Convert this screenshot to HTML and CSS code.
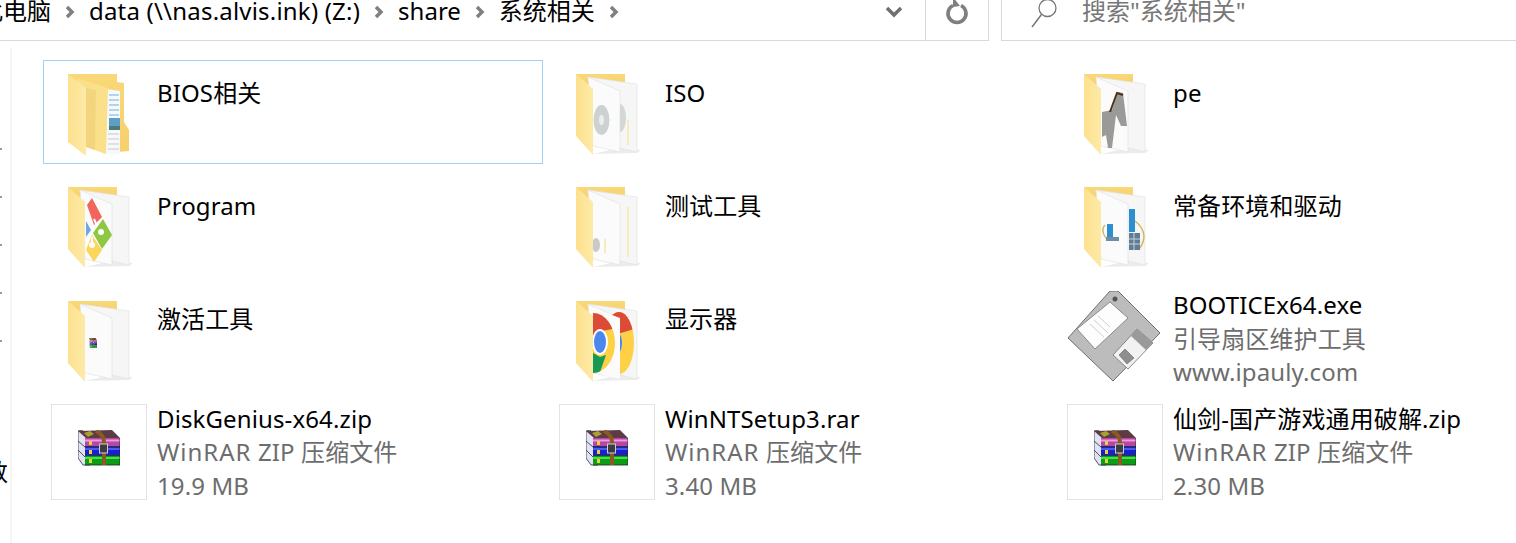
FILE: index.html
```html
<!DOCTYPE html>
<html lang="zh-CN">
<head>
    <meta charset="UTF-8">
    <title>系统相关</title>
    <link rel="stylesheet" href="styles.css">
</head>
<body>
    <svg class="defs" width="0" height="0">
        <defs>
            <linearGradient id="flapFill" x1="0" y1="0" x2="1" y2="0">
                <stop offset="0" stop-color="#fde08d"/>
                <stop offset="1" stop-color="#fdeaa8"/>
            </linearGradient>
            <linearGradient id="backFill" x1="0" y1="0" x2="0" y2="1">
                <stop offset="0" stop-color="#f9d878"/>
                <stop offset="1" stop-color="#f6d06c"/>
            </linearGradient>
            <clipPath id="backPaper"><polygon points="61,22 78,20 78,88 61,83"/></clipPath>
            <clipPath id="chromeFront"><ellipse cx="34" cy="52" rx="22" ry="30"/></clipPath>
            <clipPath id="chromeBack"><ellipse cx="60" cy="52" rx="15" ry="31"/></clipPath>
            <g id="folderBack">
                <polygon points="34,90 78,89 82,86 60,84" fill="#ececec"/>
                <polygon points="17,10 66,10 66,24 17,24" fill="url(#backFill)"/>
            </g>
            <g id="folderPapers">
                <polygon points="29,13 78,20 78,88 61,84" fill="#f6f6f6" stroke="#e2e2e2" stroke-width=".7"/>
                <polygon points="29,13 61,27 61,88 34,82" fill="#fbfbfb" stroke="#e2e2e2" stroke-width=".7"/>
            </g>
            <polygon id="folderFlap" points="17,10 34,25 34,91 17,72" fill="url(#flapFill)"/>
            <g id="rarBooks">
                <polygon points="0,1 4,0 12,11 12,35 5,35 0,28" fill="#dfe3f2" stroke="#2c2c3a" stroke-width=".8"/>
                <path d="M0 11l7 6M0 20l7 7" stroke="#2c2c3a" stroke-width=".8"/>
                <polygon points="0,1 34,0 42,8 8,8" fill="#5c3b45"/>
                <polygon points="6,3 12,1 16,4 10,7" fill="#a8a030"/>
                <rect x="7" y="8" width="35" height="8.500" fill="#b7479f"/>
                <rect x="7" y="16.500" width="35" height="9" fill="#1a1fd0"/>
                <rect x="7" y="25.500" width="35" height="9.500" fill="#0c9c16"/>
                <rect x="7" y="9.500" width="35" height="2" fill="#ee9ce0"/>
                <rect x="7" y="18" width="35" height="2" fill="#4a5cf2"/>
                <rect x="7" y="27" width="35" height="2" fill="#46df4e"/>
                <path d="M7 16.500h35M7 25.500h35M7 35h35M42 8v27" stroke="#1d2a1d" stroke-width=".8"/>
                <rect x="11" y="11" width="3" height="4" fill="#e6d23a"/>
                <rect x="11" y="20" width="3" height="4" fill="#e6d23a"/>
                <rect x="11" y="29" width="3" height="4" fill="#e6d23a"/>
                <path d="M18 1 C24 4 26 7 26 12 V35" fill="none" stroke="#8a5a22" stroke-width="4"/>
                <rect x="21.500" y="14" width="8" height="9" fill="#3c3c3c" stroke="#cfcfcf" stroke-width="1"/>
            </g>
        </defs>
    </svg>

    <header class="topbar">
        <div class="address">
            <div class="crumbs">
                <span class="crumb first">此电脑</span>
                <svg class="chevron" viewBox="0 0 10 14"><path d="M2 2l5 5-5 5"/></svg>
                <span class="crumb wide">data (\\nas.alvis.ink) (Z:)</span>
                <svg class="chevron" viewBox="0 0 10 14"><path d="M2 2l5 5-5 5"/></svg>
                <span class="crumb">share</span>
                <svg class="chevron" viewBox="0 0 10 14"><path d="M2 2l5 5-5 5"/></svg>
                <span class="crumb">系统相关</span>
                <svg class="chevron" viewBox="0 0 10 14"><path d="M2 2l5 5-5 5"/></svg>
            </div>
            <button class="drop">
                <svg viewBox="0 0 18 12" width="18" height="12"><path d="M2 2l7 7 7-7" fill="none" stroke="#6f6f6f" stroke-width="3.500"/></svg>
            </button>
            <button class="refresh">
                <svg viewBox="0 0 24 28" width="24" height="28"><path d="M8 5.500a9 9 0 1 0 8 0" fill="none" stroke="#7f7f7f" stroke-width="3.600"/><path d="M8 -3v10l7 -1z" fill="#7f7f7f"/></svg>
            </button>
        </div>
        <div class="search">
            <svg class="lens" viewBox="0 0 28 28" width="28" height="28"><circle cx="17.500" cy="8" r="8.500" fill="none" stroke="#777" stroke-width="1.300"/><path d="M11.500 14.500L2 27" stroke="#777" stroke-width="1.500"/></svg>
            <span>搜索"系统相关"</span>
        </div>
    </header>

    <main class="body">
        <aside class="nav">
            <i class="dot"></i><i class="dot"></i><i class="dot"></i><i class="dot"></i><i class="dot"></i>
            <span class="nav-label">数</span>
        </aside>

        <section class="grid">
            <div class="tile selected">
                <svg class="icon" viewBox="0 0 96 96">
                    <polygon points="17,10 66,10 66,18 73,19 73,58 78,66 78,87 55,89 17,70" fill="url(#backFill)"/>
                    <polygon points="55,25 69,27 69,90 52,90" fill="#f7f8f9"/>
                    <path d="M58 31h10M58 36h10M58 41h10M58 46h10M58 51h10" stroke="#6cb3de" stroke-width="1"/>
                    <rect x="58" y="54" width="11" height="12" fill="#5c9fc9"/>
                    <rect x="58" y="62" width="11" height="4" fill="#4d7c74"/>
                    <path d="M57 70h11M57 75h11M57 80h11M57 85h11" stroke="#c9c9c9" stroke-width="1"/>
                    <polygon points="26,14 57,24 55,90 35,83" fill="#fbe08c"/>
                    <polygon points="35,24 45,26 44,86 35,83" fill="#f3d57e"/>
                    <polygon points="17,10 35,24 35,92 17,78" fill="url(#flapFill)"/>
                </svg>
                <div class="info folder"><div class="name">BIOS相关</div></div>
            </div>

            <div class="tile">
                <svg class="icon" viewBox="0 0 96 96">
                    <use href="#folderBack"/><use href="#folderPapers"/>
                    <ellipse cx="61" cy="54" rx="6" ry="14" fill="#d3d8d6" clip-path="url(#backPaper)"/>
                    <ellipse cx="42.500" cy="56" rx="8" ry="15" fill="#cdd2d0"/>
                    <ellipse cx="42.500" cy="56" rx="2.500" ry="5" fill="#eceeed"/>
                    <path d="M69 56v25" stroke="#f8e6a8" stroke-width="1.500"/>
                    <use href="#folderFlap"/>
                </svg>
                <div class="info folder"><div class="name">ISO</div></div>
            </div>

            <div class="tile">
                <svg class="icon" viewBox="0 0 96 96">
                    <use href="#folderBack"/><use href="#folderPapers"/>
                    <polygon points="35,48 45,46 51,28 56,29 60,62 54,62 49,51 45,84 41,84 39,71 35,73" fill="#9a9a98"/>
                    <path d="M43 48L50 29l6 2" fill="none" stroke="#4a3418" stroke-width="2"/>
                    <use href="#folderFlap"/>
                </svg>
                <div class="info folder"><div class="name">pe</div></div>
            </div>

            <div class="tile">
                <svg class="icon" viewBox="0 0 96 96">
                    <use href="#folderBack"/><use href="#folderPapers"/>
                    <polygon points="36,28 41,21 51,40 43,48" fill="#f2655c"/>
                    <polygon points="52,42 61,58 51,72 42,56" fill="#8fc742"/>
                    <polygon points="41,58 51,73 43,85 35,73" fill="#fbd65a"/>
                    <polygon points="35,44 40,53 35,60" fill="#6fa6ea"/>
                    <circle cx="50" cy="55" r="3" fill="#fff"/>
                    <circle cx="41" cy="68" r="3" fill="#fff"/>
                    <path d="M43 42l3 7M41 60v8" stroke="#fff" stroke-width="2"/>
                    <use href="#folderFlap"/>
                </svg>
                <div class="info folder"><div class="name">Program</div></div>
            </div>

            <div class="tile">
                <svg class="icon" viewBox="0 0 96 96">
                    <use href="#folderBack"/><use href="#folderPapers"/>
                    <path d="M69 30v50M46 62v14" stroke="#f8e6a8" stroke-width="1.500"/>
                    <ellipse cx="37" cy="68" rx="4" ry="7" fill="#c9c9c9"/>
                    <use href="#folderFlap"/>
                </svg>
                <div class="info folder"><div class="name">测试工具</div></div>
            </div>

            <div class="tile">
                <svg class="icon" viewBox="0 0 96 96">
                    <use href="#folderBack"/><use href="#folderPapers"/>
                    <path d="M68 44C78 52 80 62 72 72" fill="none" stroke="#d3b95f" stroke-width="1.500"/>
                    <rect x="62" y="32" width="6" height="23" fill="#2e8fd0"/>
                    <rect x="62" y="56" width="11" height="17" fill="#5f7d93"/>
                    <path d="M62 62h11M62 67h11M67 56v17" stroke="#c8d4dc" stroke-width="1"/>
                    <path d="M38 48C34 52 36 62 44 63" fill="none" stroke="#d3b95f" stroke-width="1.500"/>
                    <rect x="40" y="47" width="6" height="13" fill="#2e8fd0"/>
                    <rect x="39" y="60" width="13" height="4" fill="#6b8fa8"/>
                    <use href="#folderFlap"/>
                </svg>
                <div class="info folder"><div class="name">常备环境和驱动</div></div>
            </div>

            <div class="tile">
                <svg class="icon" viewBox="0 0 96 96">
                    <use href="#folderBack"/><use href="#folderPapers"/>
                    <svg x="38" y="47" width="8" height="10" viewBox="0 0 42 36" preserveAspectRatio="none"><use href="#rarBooks"/></svg>
                    <use href="#folderFlap"/>
                </svg>
                <div class="info folder"><div class="name">激活工具</div></div>
            </div>

            <div class="tile">
                <svg class="icon" viewBox="0 0 96 96">
                    <use href="#folderBack"/><use href="#folderPapers"/>
                    <g clip-path="url(#chromeBack)">
                        <rect x="45" y="20" width="30" height="64" fill="#fdd045"/>
                        <path d="M45 20H75V38L62 42H45z" fill="#dc4a38"/>
                        <ellipse cx="60" cy="52" rx="3" ry="9" fill="#4a88ee"/>
                    </g>
                    <polygon points="45,21 61,27 61,88 45,85" fill="#fbfbfb"/>
                    <g clip-path="url(#chromeFront)">
                        <rect x="34" y="20" width="24" height="64" fill="#fdd045"/>
                        <path d="M34 20H58V37L43 40L34 46z" fill="#dc4a38"/>
                        <path d="M34 62L41 66L47 64L40 84H34z" fill="#159a52"/>
                    </g>
                    <ellipse cx="41" cy="51" rx="8" ry="13" fill="#fff"/>
                    <ellipse cx="41" cy="51" rx="6" ry="11" fill="#4a88ee"/>
                    <use href="#folderFlap"/>
                </svg>
                <div class="info folder"><div class="name">显示器</div></div>
            </div>

            <div class="tile">
                <svg class="icon" viewBox="7 5 96 96">
                    <polygon points="50,5 58,5 100,47 53,95 8,52" fill="#bcbcbc" stroke="#6f6f6f" stroke-width="1"/>
                    <polygon points="50,16 68,32 35,63 17,43" fill="#fdfdfd" stroke="#777" stroke-width=".8"/>
                    <path d="M30 38l14 13M34 34l14 13M38 30l12 11" stroke="#cfcfcf" stroke-width="1"/>
                    <polygon points="77,43 93,57 68,83 53,69" fill="#f2f2f2" stroke="#6f6f6f" stroke-width=".8"/>
                    <polygon points="77,43 93,57 86,64 71,50" fill="#9a9a9a"/>
                    <polygon points="65,63 74,72 67,78 59,69" fill="#8e8e8e" stroke="#666" stroke-width=".6"/>
                    <circle cx="55" cy="13" r="2.500" fill="#555"/>
                </svg>
                <div class="info">
                    <div class="name">BOOTICEx64.exe</div>
                    <div class="meta">引导扇区维护工具</div>
                    <div class="meta">www.ipauly.com</div>
                </div>
            </div>

            <div class="tile">
                <div class="thumb"><svg viewBox="0 0 42 36" width="42" height="36"><use href="#rarBooks"/></svg></div>
                <div class="info">
                    <div class="name">DiskGenius-x64.zip</div>
                    <div class="meta"><span class="brand">WinRAR</span> ZIP 压缩文件</div>
                    <div class="meta">19.9 MB</div>
                </div>
            </div>

            <div class="tile">
                <div class="thumb"><svg viewBox="0 0 42 36" width="42" height="36"><use href="#rarBooks"/></svg></div>
                <div class="info">
                    <div class="name">WinNTSetup3.rar</div>
                    <div class="meta"><span class="brand">WinRAR</span> 压缩文件</div>
                    <div class="meta">3.40 MB</div>
                </div>
            </div>

            <div class="tile">
                <div class="thumb"><svg viewBox="0 0 42 36" width="42" height="36"><use href="#rarBooks"/></svg></div>
                <div class="info">
                    <div class="name">仙剑-国产游戏通用破解.zip</div>
                    <div class="meta"><span class="brand">WinRAR</span> ZIP 压缩文件</div>
                    <div class="meta">2.30 MB</div>
                </div>
            </div>
        </section>
    </main>
</body>
</html>
```

FILE: styles.css
```css
* {
    box-sizing: border-box;
}

html, body {
    margin: 0;
    height: 100%;
    overflow: hidden;
}

body {
    width: 1516px;
    height: 543px;
    background: #fff;
    color: #000;
    font-family: "Noto Sans", "Noto Sans CJK SC", sans-serif;
    font-size: 24px;
    display: flex;
    flex-direction: column;
}

.defs {
    flex: none;
}

/* top bar */
.topbar {
    height: 41px;
    flex: none;
    display: flex;
    gap: 12px;
    overflow: hidden;
}

.address {
    width: 989px;
    flex: none;
    display: flex;
    border-right: 1px solid #d9d9d9;
    border-bottom: 1px solid #d9d9d9;
}

.crumbs {
    flex: 1;
    min-width: 0;
    display: flex;
    align-items: flex-start;
    gap: 14px;
    line-height: 22px;
    white-space: nowrap;
}

.crumb.first {
    margin-left: -21px;
}

.crumb.wide {
    letter-spacing: .2px;
}

.chevron {
    width: 10px;
    height: 14px;
    margin-top: 5px;
    flex: none;
}

.chevron path {
    fill: none;
    stroke: #808080;
    stroke-width: 3.500;
}

.drop, .refresh {
    border: 0;
    padding: 0;
    background: none;
    height: 40px;
    display: flex;
    justify-content: center;
}

.drop {
    width: 63px;
    padding-top: 6px;
    border-right: 1px solid #d9d9d9;
}

.refresh {
    width: 62px;
}

.search {
    flex: 1;
    display: flex;
    align-items: flex-start;
    gap: 24px;
    padding-left: 28px;
    color: #777;
    line-height: 22px;
    border-left: 1px solid #d9d9d9;
    border-bottom: 1px solid #d9d9d9;
    white-space: nowrap;
}

/* content */
.body {
    flex: 1;
    min-height: 0;
    display: flex;
}

.nav {
    width: 12px;
    flex: none;
    margin-top: 7px;
    padding-top: 100px;
    border-right: 2px solid #f5f5f5;
    display: flex;
    flex-direction: column;
    overflow: hidden;
}

.dot {
    width: 2px;
    height: 2px;
    margin-bottom: 46px;
    background: #9a9a9a;
    flex: none;
}

.nav-label {
    margin: 68px 0 0 -16px;
    line-height: 32px;
}

.grid {
    flex: none;
    padding: 19px 0 0 31px;
    display: grid;
    grid-template-columns: repeat(3, 500px);
    grid-auto-rows: 104px;
    column-gap: 8px;
    row-gap: 9.33px;
    align-content: start;
}

.tile {
    display: flex;
    align-items: center;
    gap: 10px;
    padding: 3px 7px;
    border: 1px solid transparent;
    min-width: 0;
}

.tile.selected {
    border-color: #99d1ff;
}

.icon {
    width: 96px;
    height: 96px;
    flex: none;
}

.thumb {
    width: 96px;
    height: 96px;
    flex: none;
    padding-bottom: 7px;
    border: 1px solid #e3e3e3;
    display: flex;
    align-items: center;
    justify-content: center;
}

.info {
    line-height: 33.500px;
    letter-spacing: .12px;
    white-space: nowrap;
}

.info.folder {
    padding-bottom: 6px;
    height: 73px;
}

.meta {
    color: #6d6d6d;
}

.brand {
    letter-spacing: 1px;
}
```
